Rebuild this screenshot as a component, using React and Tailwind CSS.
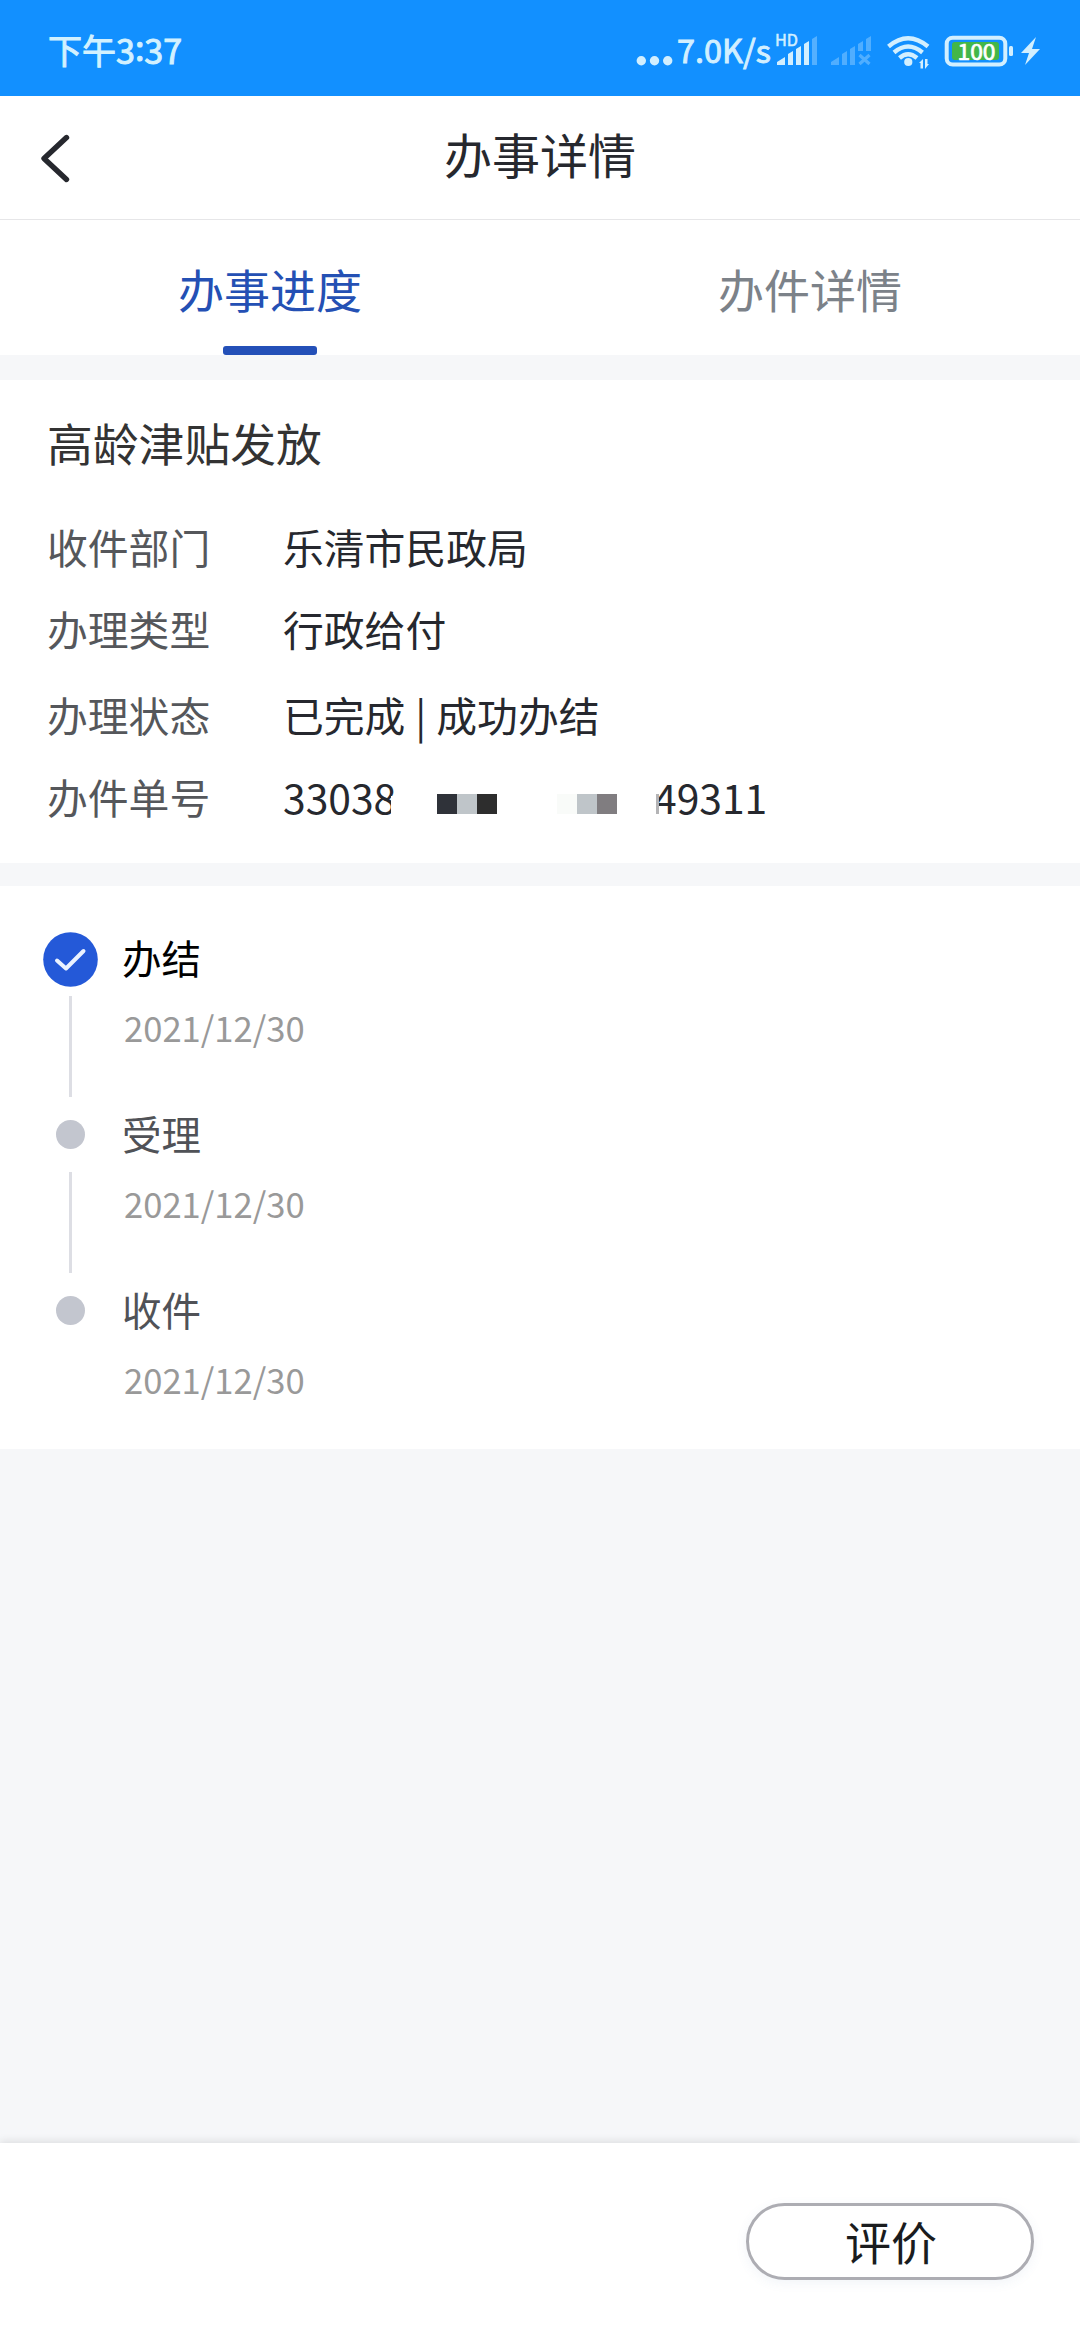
import clsx from 'clsx';

const rows = [
  { label: '收件部门', value: '乐清市民政局', gap: 'mt-[62px]' },
  { label: '办理类型', value: '行政给付', gap: 'mt-[42px]' },
  { label: '办理状态', value: '已完成 | 成功办结', gap: 'mt-[46px]' },
];

const steps = [
  { title: '办结', date: '2021/12/30', done: true },
  { title: '受理', date: '2021/12/30' },
  { title: '收件', date: '2021/12/30' },
];

function StatusIcons() {
  return (
    <svg width="450" height="96" viewBox="630 0 450 96" fill="#d2efff">
      <circle cx="641.3" cy="60.8" r="4.7" />
      <circle cx="654.5" cy="60.8" r="4.7" />
      <circle cx="667.7" cy="60.8" r="4.7" />
      <g stroke="#d2efff" strokeWidth="0.9">
        <text x="677" y="63.3" fontSize="32" textLength="94" lengthAdjust="spacingAndGlyphs">7.0K/s</text>
        <text x="775" y="45.8" fontSize="15.5" strokeWidth="0.5" textLength="23" lengthAdjust="spacingAndGlyphs">HD</text>
      </g>

      {/* SIM 1 */}
      <path d="M777 65v-3l8-5v8zM788 65V54l5-3v14zM796 65V49l5-3v19zM804 65V44l5-3v24z" />
      <path opacity="0.35" d="M812 65V39l5-3v29z" />

      {/* SIM 2, no service */}
      <g opacity="0.32">
        <path d="M831 65v-3l8-5v8zM842 65V54l5-3v14zM850 65V49l5-3v19zM858 51v-7l5-3v10zM866 51V39l5-3v15z" />
        <path d="M859.5 55l10 9M869.5 55l-10 9" stroke="#d2efff" strokeWidth="3.2" />
      </g>

      {/* Wifi */}
      <g fill="none" stroke="#d2efff" strokeWidth="4.4">
        <path d="M888.5 46.5Q908 30 928 46.5" />
        <path d="M894 52.5Q908 40.5 922.5 52.5" />
        <path d="M899.5 58Q908 50.5 917 58" />
      </g>
      <circle cx="908.3" cy="62" r="4.1" />
      <path d="M919 63l4-4v9.5h-2.5V63zM925 59h2.5v5h1.5l-4 5z" />

      {/* Battery */}
      <rect x="952" y="42" width="47" height="18" rx="3" fill="#43b649" />
      <rect x="946.7" y="37.7" width="58.6" height="26.8" rx="6" fill="none" stroke="#d2efff" strokeWidth="4" />
      <text x="957.5" y="59.5" fill="#fff" stroke="#fff" strokeWidth="0.7" fontSize="22" textLength="38" lengthAdjust="spacingAndGlyphs">100</text>
      <rect x="1009" y="46" width="4" height="10" rx="1.5" />
      <path d="M1036 37L1021 53h8l-4 12 15-16h-8z" />
    </svg>
  );
}

function StatusBar() {
  return (
    <div className="flex h-24 items-center justify-between bg-[#1290ff]">
      <div className="mt-1 ml-12 text-[34px] leading-[34px] text-[#d2f1ff] [-webkit-text-stroke:1px_#d2f1ff]">
        下午3<span className="relative -top-[3px]">:</span>37
      </div>
      <StatusIcons />
    </div>
  );
}

function Header() {
  return (
    <header className="flex h-31 items-center border-b border-[#e6e6e8] bg-white">
      <svg className="ml-9 h-13 w-9" viewBox="0 0 36 52" fill="none" stroke="#26282e" strokeWidth="5.4" strokeLinecap="round" strokeLinejoin="round">
        <path d="M30.5 5.5L8 26.5L30.5 47.5" />
      </svg>
      <h1 className="mr-18 flex-1 pb-[9px] text-center text-[48px] leading-[48px] text-[#26282e]">办事详情</h1>
    </header>
  );
}

function Tab({ label, active }) {
  return (
    <div className="flex h-full flex-1 flex-col items-center justify-between pt-[45px]">
      <span className={clsx('text-[46px] leading-[46px]', active ? 'text-[#2450b4]' : 'text-[#7c8289]')}>{label}</span>
      {active && <span className="h-[9px] w-[94px] rounded-[3px] bg-[#2450b8]" />}
    </div>
  );
}

// Hidden part of the case number
function Mosaic({ className }) {
  return (
    <span className={clsx('flex h-5 w-15', className)}>
      <i className="w-5 bg-current" />
      <i className="w-5 bg-[#bfc5c9]" />
      <i className="w-5 bg-(--last)" />
    </span>
  );
}

function InfoRow({ label, gap, children }) {
  return (
    <div className={clsx('flex h-10 text-[40.8px] leading-[40px]', gap)}>
      <span className="w-[236px] text-[#55575b]">{label}</span>
      <span className="flex whitespace-pre text-[#26282e] [word-spacing:0.8px]">{children}</span>
    </div>
  );
}

function Step({ title, date, done, last }) {
  return (
    <li className="flex h-44">
      <div className="flex w-[55px] flex-col items-center">
        <div className="flex h-[55px] items-center">
          {done ? (
            <svg width="55" height="55" viewBox="0 0 55 55" fill="none">
              <circle cx="27.5" cy="27.5" r="27.3" fill="#2459d8" />
              <path d="M14 28.5L23 36.5L40.5 19" stroke="#eaf2ff" strokeWidth="4" strokeLinecap="round" strokeLinejoin="round" />
            </svg>
          ) : (
            <span className="mb-0.5 size-[29px] rounded-full bg-[#c3c6cf]" />
          )}
        </div>
        {!last && <span className="mt-[9px] h-[101px] w-[3px] bg-[#dddee4]" />}
      </div>
      <div className="ml-6 pt-[5px]">
        <div className={clsx('text-[39.5px] leading-[40px]', done ? 'text-black' : 'text-[#505257]')}>{title}</div>
        <div className="mt-8 ml-0.5 text-[34.6px] leading-[36px] text-[#999]">{date}</div>
      </div>
    </li>
  );
}

export default function App() {
  return (
    <div className="flex h-[2340px] w-[1080px] flex-col overflow-hidden bg-[#f6f7f9] font-['Noto_Sans_CJK_SC',sans-serif]">
      <StatusBar />
      <Header />
      <nav className="flex h-[135px] bg-white">
        <Tab label="办事进度" active />
        <Tab label="办件详情" />
      </nav>

      <section className="mt-[25px] h-[483px] bg-white pt-[39px] pl-[47px]">
        <h2 className="text-[45.8px] leading-[46px] text-[#333]">高龄津贴发放</h2>
        {rows.map((row) => (
          <InfoRow key={row.label} label={row.label} gap={row.gap}>{row.value}</InfoRow>
        ))}
        <InfoRow label="办件单号" gap="mt-[42px]">
          <span className="relative w-[114px]">
            33038
            <i className="absolute top-[19px] right-0 h-5 w-[6px] bg-white" />
          </span>
          <Mosaic className="mt-[17px] ml-[40px] text-[#2f3239] [--last:#2d2d2d]" />
          <Mosaic className="mt-[17px] ml-[60px] text-[#f9fbf9] [--last:#807d80]" />
          <span className="relative ml-[37px]">
            49311
            <i className="absolute top-[5px] left-0 h-[34px] w-[5px] bg-white" />
            <i className="absolute top-[17px] left-[2px] h-5 w-[3px] bg-[#b4b4b6]" />
          </span>
        </InfoRow>
      </section>

      <ul className="mt-[23px] h-[563px] bg-white pt-[46px] pl-[43px]">
        {steps.map((step, i) => (
          <Step key={step.title} {...step} last={i === steps.length - 1} />
        ))}
      </ul>

      <footer className="mt-auto flex h-[197px] items-start justify-end bg-white pt-[60px] pr-[46px] shadow-[0_-2px_8px_rgba(0,0,0,0.1)]">
        <button className="h-[77px] w-72 rounded-full border-[3px] border-[#adadb3] pb-1 pl-0.5 text-[46px] leading-[46px] text-[#1a1c1e] shadow-[0_3px_12px_rgba(80,110,160,0.08)]">
          评价
        </button>
      </footer>
    </div>
  );
}
